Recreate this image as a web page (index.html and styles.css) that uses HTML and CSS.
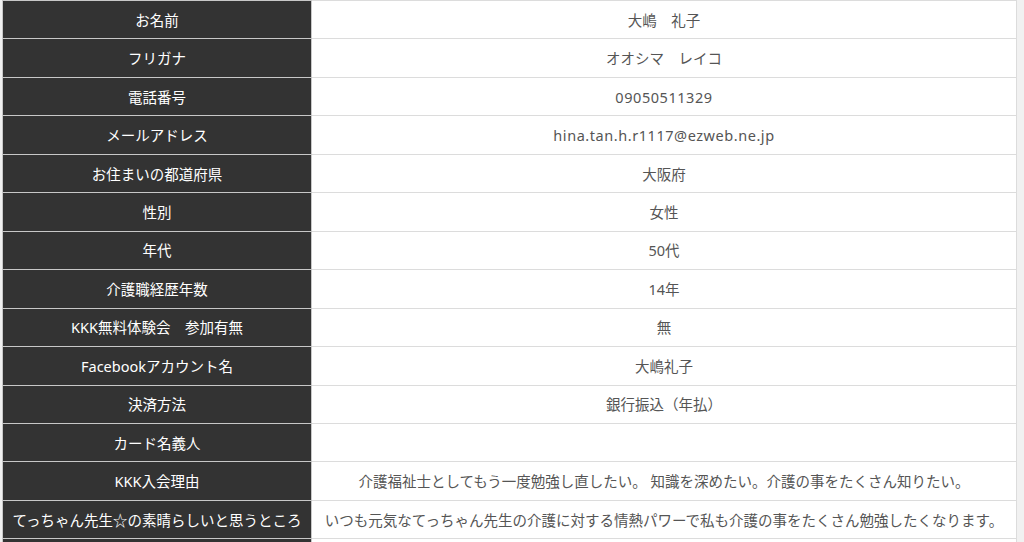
FILE: index.html
```html
<!DOCTYPE html>
<html lang="ja">
<head>
<meta charset="utf-8">
<title>登録内容</title>
<link rel="stylesheet" href="styles.css">
</head>
<body>
<table class="info">
<tbody>
<tr><th>お名前</th><td>大嶋　礼子</td></tr>
<tr><th>フリガナ</th><td>オオシマ　レイコ</td></tr>
<tr><th>電話番号</th><td class="latin">09050511329</td></tr>
<tr><th>メールアドレス</th><td class="latin">hina.tan.h.r1117@ezweb.ne.jp</td></tr>
<tr><th>お住まいの都道府県</th><td>大阪府</td></tr>
<tr><th>性別</th><td>女性</td></tr>
<tr><th>年代</th><td>50代</td></tr>
<tr><th>介護職経歴年数</th><td>14年</td></tr>
<tr><th>KKK無料体験会　参加有無</th><td>無</td></tr>
<tr><th>Facebookアカウント名</th><td>大嶋礼子</td></tr>
<tr><th>決済方法</th><td>銀行振込（年払）</td></tr>
<tr><th>カード名義人</th><td></td></tr>
<tr><th>KKK入会理由</th><td>介護福祉士としてもう一度勉強し直したい。 知識を深めたい。介護の事をたくさん知りたい。</td></tr>
<tr><th>てっちゃん先生☆の素晴らしいと思うところ</th><td>いつも元気なてっちゃん先生の介護に対する情熱パワーで私も介護の事をたくさん勉強したくなります。</td></tr>
<tr><th>&nbsp;</th><td>&nbsp;</td></tr>
</tbody>
</table>
</body>
</html>
```
FILE: styles.css
```css
html, body {
  background: #f1f1f1;
}
body {
  margin: 0 0 0 2px;
  font-family: "Noto Sans", "Noto Sans CJK JP", sans-serif;
  font-size: 14.5px;
}
.info {
  width: 1015px;
  border-collapse: collapse;
  table-layout: fixed;
}
.info th,
.info td {
  height: 37.46px;
  padding: 0 6px;
  text-align: center;
  vertical-align: middle;
  font-weight: normal;
  line-height: 20px;
  white-space: nowrap;
  border: 1px solid #dcdcdc;
}
.info th {
  width: 296px;
  background: #333333;
  color: #ffffff;
  border-color: #c8c8c8;
}
.info td {
  background: #ffffff;
  color: #555555;
}
.info td.latin {
  letter-spacing: 0.55px;
}
```
